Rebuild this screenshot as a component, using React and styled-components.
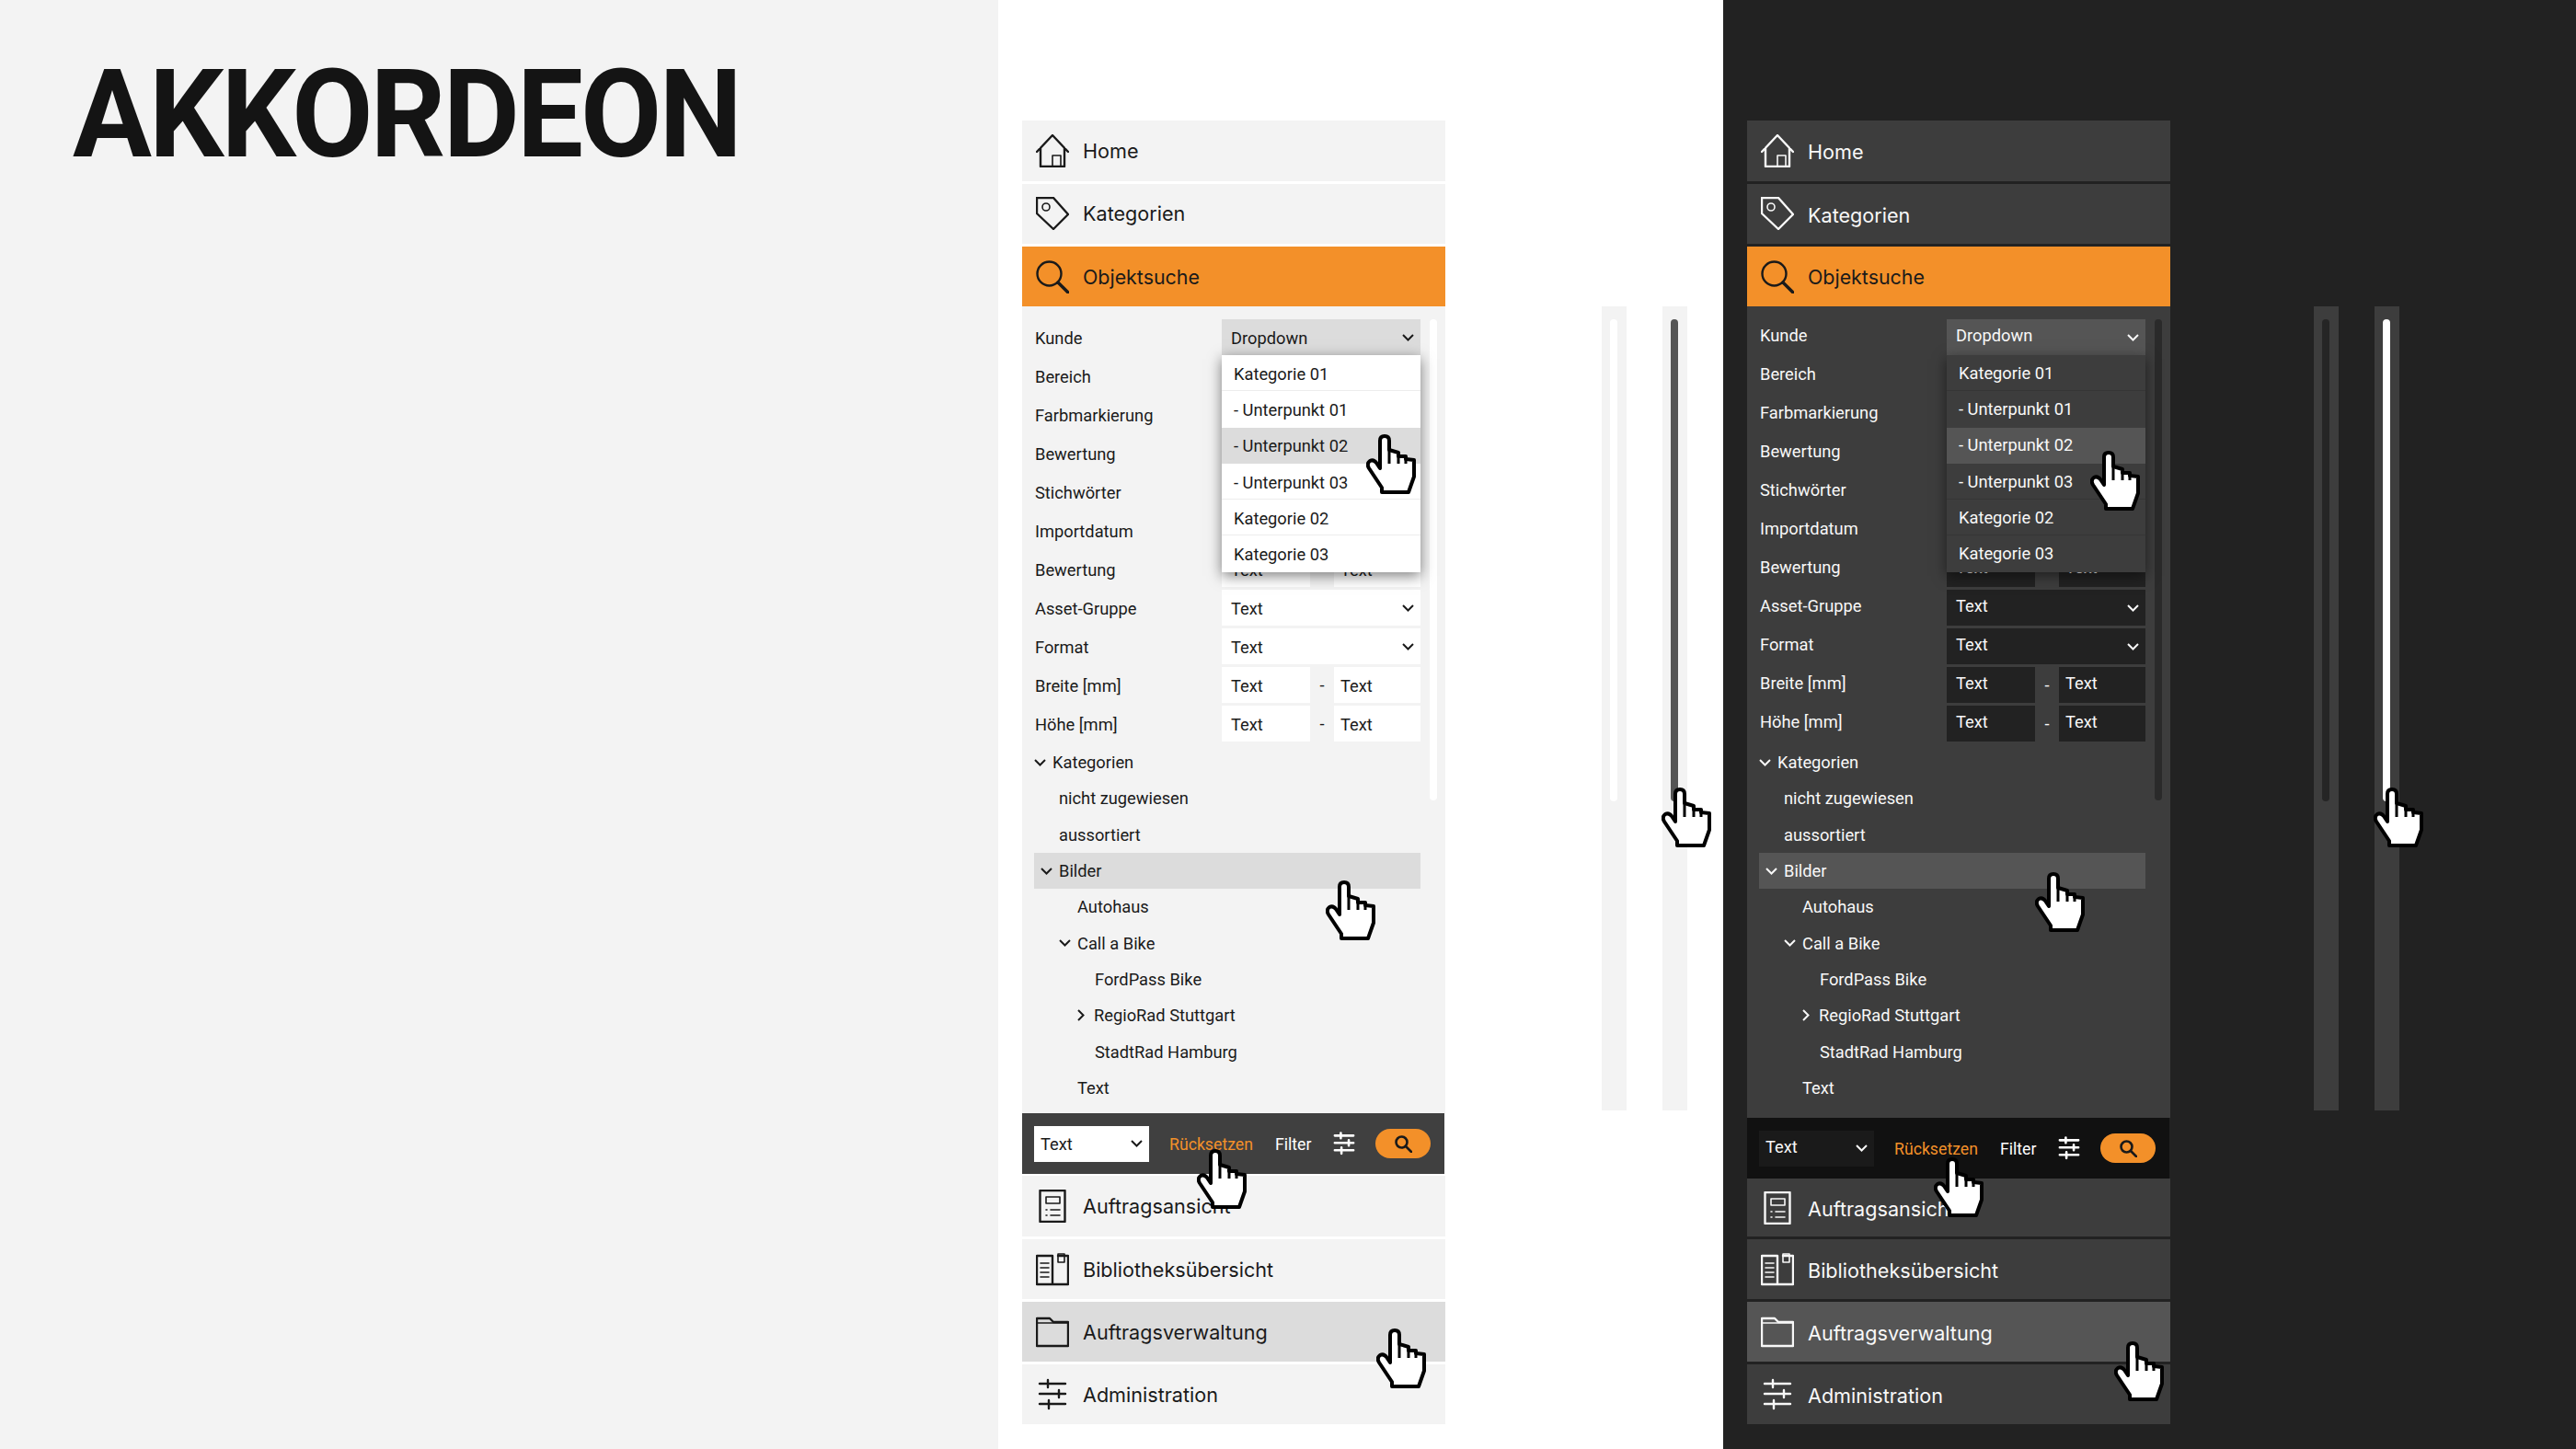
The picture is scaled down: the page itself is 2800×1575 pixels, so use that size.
import React from 'react';
import styled, { createGlobalStyle, ThemeProvider } from 'styled-components';

const light = {
  page: '#ffffff',
  surface: '#f3f3f3',
  hover: '#dcdcdc',
  text: '#1a1a1a',
  input: '#ffffff',
  menu: '#ffffff',
  separator: '#ececec',
  scroll: '#ffffff',
  toolbar: '#404040',
  toolbarSelect: '#ffffff',
  toolbarSelectText: '#1a1a1a',
  textPad: '1px 0 0',
  menuPad: '2px',
  navPad: '0px',
  selectPad: '0px',
  bodyHeight: '877px',
  afterToolbar: '2px',
  lowerFirst: '66px',
  demoGap: '170px',
  thumbIdle: '#ffffff',
  thumbActive: '#555555',
};

const dark = {
  page: '#222222',
  surface: '#3d3d3d',
  hover: '#555555',
  text: '#f8f8f8',
  input: '#222222',
  menu: '#3d3d3d',
  separator: '#353535',
  scroll: '#2a2a2a',
  toolbar: '#111111',
  toolbarSelect: '#1a1a1a',
  toolbarSelectText: '#f8f8f8',
  textPad: '0 0 4px',
  menuPad: '0px',
  navPad: '3px',
  selectPad: '3px',
  bodyHeight: '882px',
  afterToolbar: '0px',
  lowerFirst: '63px',
  demoGap: '156px',
  thumbIdle: '#252525',
  thumbActive: '#ffffff',
};

const GlobalStyle = createGlobalStyle`
  html, body { margin: 0; padding: 0; }
  body { background: #f3f3f3; font-family: Roboto, "Liberation Sans", sans-serif; }
`;

const Page = styled.div`
  position: relative;
  display: grid;
  grid-template-columns: 1085px 788px 927px;
  width: 2800px;
  height: 1575px;
  overflow: hidden;
`;

const Intro = styled.section`
  background: #f3f3f3;
  padding: 56px 0 0 79px;
`;

const Title = styled.h1`
  margin: 0;
  font-family: Roboto, "Liberation Sans", sans-serif;
  font-size: 134px;
  line-height: 138px;
  font-weight: 700;
  letter-spacing: -3px;
  color: #141414;
  transform: scaleX(0.955);
  transform-origin: left center;
`;

const Variant = styled.section`
  display: flex;
  align-items: flex-start;
  padding: 131px 0 0 26px;
  background: ${(p) => p.theme.page};
`;

const Panel = styled.div`
  display: flex;
  flex-direction: column;
  flex: 0 0 460px;
  color: ${(p) => p.theme.text};
`;

const NavRow = styled.div`
  display: flex;
  align-items: center;
  gap: 15px;
  height: ${(p) => p.$height || '65px'};
  margin-bottom: 3px;
  padding-left: 15px;
  background: ${(p) => (p.$hover ? p.theme.hover : p.theme.surface)};
  font-family: Inter, Roboto, sans-serif;
  font-size: 21.6px;
  svg { flex: none; }
`;

const NavLabel = styled.span`
  padding-top: ${(p) => p.theme.navPad};
`;

const ActiveRow = styled.div`
  display: flex;
  align-items: center;
  gap: 15px;
  height: 65px;
  padding-left: 15px;
  background: #f39029;
  color: #1a1a1a;
  font-family: Inter, Roboto, sans-serif;
  font-size: 21.4px;
`;

const Body = styled.div`
  position: relative;
  height: ${(p) => p.theme.bodyHeight};
  padding: 14px 0 0 14px;
  box-sizing: border-box;
  overflow: hidden;
  background: ${(p) => p.theme.surface};
  font-size: 18.3px;
`;

const InnerScroll = styled.div`
  position: absolute;
  left: 443px;
  top: 14px;
  width: 8px;
  height: 523px;
  border-radius: 4px;
  background: ${(p) => p.theme.scroll};
`;

const Fields = styled.div`
  display: grid;
  grid-template-columns: 203px 216px;
  grid-auto-rows: 39px;
  row-gap: 3px;
  align-items: center;
`;

const Label = styled.div`
  padding: ${(p) => p.theme.textPad};
`;

const Control = styled.div`
  position: relative;
  display: flex;
  align-items: center;
  justify-content: space-between;
  height: 39px;
  padding: 0 7px 0 10px;
  box-sizing: border-box;
  background: ${(p) => (p.$open ? p.theme.hover : p.theme.input)};
  > span { padding: ${(p) => p.theme.textPad}; }
`;

const RangeGroup = styled.div`
  display: grid;
  grid-template-columns: 96px 26px 94px;
  align-items: center;
  text-align: center;
`;

const RangeInput = styled(Control)`
  padding-left: ${(p) => p.$padLeft || '10px'};
  text-align: left;
`;

const Menu = styled.div`
  position: absolute;
  z-index: 2;
  left: 0;
  top: 39px;
  width: 216px;
  background: ${(p) => p.theme.menu};
  box-shadow: 0 4px 14px rgba(0, 0, 0, 0.5);
`;

const MenuItem = styled.div`
  display: flex;
  align-items: center;
  height: 39.3px;
  box-sizing: border-box;
  padding: ${(p) => p.theme.menuPad} 0 0 13px;
  background: ${(p) => (p.$hover ? p.theme.hover : 'transparent')};
  border-bottom: 1px solid ${(p) => (p.$line ? p.theme.separator : 'transparent')};
`;

const Tree = styled.div`
  margin: 3px 0 0 -1px;
  width: 420px;
`;

const TreeRow = styled.div`
  display: flex;
  align-items: center;
  gap: ${(p) => p.$gap || '7px'};
  height: 39.3px;
  padding-left: ${(p) => p.$pad || '0px'};
  background: ${(p) => (p.$hover ? p.theme.hover : 'transparent')};
`;

const Toolbar = styled.div`
  display: flex;
  align-items: center;
  width: 459px;
  height: 66px;
  margin-bottom: ${(p) => p.theme.afterToolbar};
  padding-left: 13px;
  box-sizing: border-box;
  background: ${(p) => p.theme.toolbar};
  color: #ffffff;
  font-size: 17.7px;
`;

const ToolbarSelect = styled.div`
  display: flex;
  align-items: center;
  justify-content: space-between;
  width: 125px;
  height: 39px;
  padding: 0 7px;
  box-sizing: border-box;
  background: ${(p) => p.theme.toolbarSelect};
  color: ${(p) => p.theme.toolbarSelectText};
  font-size: 18.3px;
  span { padding-bottom: ${(p) => p.theme.selectPad}; }
`;

const ResetLink = styled.span`
  margin-left: 22px;
  padding-top: 2px;
  color: #f39029;
`;

const FilterLink = styled.span`
  margin: 0 22px 0 24px;
  padding-top: 2px;
`;

const SearchPill = styled.div`
  display: flex;
  align-items: center;
  justify-content: center;
  width: 60px;
  height: 32px;
  margin-left: 21px;
  border-radius: 16px;
  background: #f39029;
`;

const Demos = styled.div`
  display: flex;
  gap: 39px;
  margin: 202px 0 0 ${(p) => p.theme.demoGap};
`;

const Track = styled.div`
  width: 27px;
  height: 874px;
  padding: 14px 0 0 9px;
  box-sizing: border-box;
  background: ${(p) => p.theme.surface};
`;

const Thumb = styled.div`
  width: 8px;
  height: 524px;
  border-radius: 4px;
  background: ${(p) => (p.$active ? p.theme.thumbActive : p.theme.thumbIdle)};
`;

const Cursor = styled.svg`
  position: absolute;
  z-index: 5;
  left: ${(p) => p.$x}px;
  top: ${(p) => p.$y}px;
  width: 54px;
  height: 65px;
`;

const HandPointer = ({ x, y }) => (
  <Cursor $x={x} $y={y} viewBox="0 0 54 65">
    <path
      d="M17 63 L17 58 L3 37 Q0 32 4 29 Q8 27 11 31 L15 37 L15 7 Q15 2 20 2 Q25 2 25 7 L25 17 L35 20 L35 24 L43 24 L43 27 L52 28 L52 46 L46 63 Z"
      fill="#fff"
      stroke="#000"
      strokeWidth="4"
      strokeLinejoin="round"
    />
    <path d="M15 28 V37 M25 17 V32 M35 20 V32 M43 24 V32" fill="none" stroke="#000" strokeWidth="3" />
  </Cursor>
);

const Icon = ({ children, size = 36 }) => (
  <svg
    width={size}
    height={size}
    viewBox="0 0 36 36"
    fill="none"
    stroke="currentColor"
    strokeWidth="2.4"
    strokeLinejoin="round"
    strokeLinecap="round"
  >
    {children}
  </svg>
);

const HomeIcon = () => (
  <Icon>
    <path d="M1 19 L18 1 L35 19 M5 15 V35 H31 V15" />
    <path d="M18 35 V23 H27 V35" strokeWidth="1.6" />
  </Icon>
);

const TagIcon = () => (
  <Icon>
    <path d="M1 1 H19 L35 19 L19 35 L1 18 Z" />
    <circle cx="11" cy="11" r="4" strokeWidth="1.6" />
  </Icon>
);

const SearchIcon = () => (
  <Icon>
    <circle cx="14.5" cy="14.5" r="13" />
    <path d="M24 24 L35 35" strokeWidth="3.4" />
  </Icon>
);

const OrderIcon = () => (
  <Icon>
    <rect x="4.5" y="1" width="27" height="34" />
    <rect x="11" y="8" width="15" height="7" strokeWidth="1.6" />
    <path d="M11 22 H12 M16 22 H26 M11 28 H12 M16 28 H26" strokeWidth="1.6" />
  </Icon>
);

const BookIcon = () => (
  <Icon>
    <path d="M24 3 H35 V34 H1 V3 H18 V34" />
    <path d="M24 1 H31 V10 H24 Z" strokeWidth="1.6" />
    <path d="M5 11 H14 M5 16 H14 M5 21 H14 M5 26 H14" strokeWidth="1.6" />
  </Icon>
);

const FolderIcon = () => (
  <Icon>
    <path d="M1 33 V3 H15 L19 7 H35 V33 Z" />
    <path d="M1 8 H35" strokeWidth="1.6" />
  </Icon>
);

const SlidersIcon = ({ size, weight = 2.4 }) => (
  <Icon size={size}>
    <path d="M4 6 H32 M4 17 H32 M4 28 H32" strokeWidth={weight} />
    <path d="M13 2 V10 M25 13 V21 M14 24 V33" strokeWidth={weight} />
  </Icon>
);

const ChevronDown = () => (
  <svg width="13" height="8" viewBox="0 0 13 8" fill="none" stroke="currentColor" strokeWidth="2">
    <path d="M1 1 L6.5 6.5 L12 1" />
  </svg>
);

const ChevronRight = () => (
  <svg width="8" height="13" viewBox="0 0 8 13" fill="none" stroke="currentColor" strokeWidth="2">
    <path d="M1 1 L6.5 6.5 L1 12" />
  </svg>
);

const coveredLabels = ['Bereich', 'Farbmarkierung', 'Bewertung', 'Stichwörter', 'Importdatum'];

const menuItems = [
  { text: 'Kategorie 01', line: true },
  { text: '- Unterpunkt 01' },
  { text: '- Unterpunkt 02', hover: true },
  { text: '- Unterpunkt 03', line: true },
  { text: 'Kategorie 02', line: true },
  { text: 'Kategorie 03' },
];

const Range = () => (
  <RangeGroup>
    <RangeInput><span>Text</span></RangeInput>
    <span>-</span>
    <RangeInput $padLeft="7px"><span>Text</span></RangeInput>
  </RangeGroup>
);

const TextSelect = () => (
  <Control>
    <span>Text</span>
    <ChevronDown />
  </Control>
);

function Accordion({ theme, hands }) {
  return (
    <ThemeProvider theme={theme}>
      <Variant>
        <Panel>
          <NavRow $height="65.5px"><HomeIcon /><NavLabel>Home</NavLabel></NavRow>
          <NavRow $height="65.5px"><TagIcon /><NavLabel>Kategorien</NavLabel></NavRow>
          <ActiveRow><SearchIcon />Objektsuche</ActiveRow>
          <Body>
            <InnerScroll />
            <Fields>
              <Label>Kunde</Label>
              <Control $open>
                <span>Dropdown</span>
                <ChevronDown />
                <Menu>
                  {menuItems.map((item) => (
                    <MenuItem key={item.text} $hover={item.hover} $line={item.line}>
                      {item.text}
                    </MenuItem>
                  ))}
                </Menu>
              </Control>
              {coveredLabels.map((label, i) => (
                <React.Fragment key={i}>
                  <Label>{label}</Label>
                  <Control />
                </React.Fragment>
              ))}
              <Label>Bewertung</Label>
              <Range />
              <Label>Asset-Gruppe</Label>
              <TextSelect />
              <Label>Format</Label>
              <TextSelect />
              <Label>Breite [mm]</Label>
              <Range />
              <Label>Höhe [mm]</Label>
              <Range />
            </Fields>
            <Tree>
              <TreeRow><ChevronDown />Kategorien</TreeRow>
              <TreeRow $pad="27px">nicht zugewiesen</TreeRow>
              <TreeRow $pad="27px">aussortiert</TreeRow>
              <TreeRow $pad="7px" $hover><ChevronDown />Bilder</TreeRow>
              <TreeRow $pad="47px">Autohaus</TreeRow>
              <TreeRow $pad="27px"><ChevronDown />Call a Bike</TreeRow>
              <TreeRow $pad="66px">FordPass Bike</TreeRow>
              <TreeRow $pad="47px" $gap="10px"><ChevronRight />RegioRad Stuttgart</TreeRow>
              <TreeRow $pad="66px">StadtRad Hamburg</TreeRow>
              <TreeRow $pad="47px">Text</TreeRow>
              <TreeRow $pad="47px">Text</TreeRow>
            </Tree>
          </Body>
          <Toolbar>
            <ToolbarSelect>
              <span>Text</span>
              <ChevronDown />
            </ToolbarSelect>
            <ResetLink>Rücksetzen</ResetLink>
            <FilterLink>Filter</FilterLink>
            <SlidersIcon size={26} weight={3.6} />
            <SearchPill>
              <svg width="20" height="20" viewBox="0 0 20 20" fill="none" stroke="#1a1a1a" strokeWidth="2.6">
                <circle cx="8.5" cy="8.5" r="6" />
                <path d="M13 13 L19 19" strokeLinecap="round" />
              </svg>
            </SearchPill>
          </Toolbar>
          <NavRow $height={theme.lowerFirst}><OrderIcon /><NavLabel>Auftragsansicht</NavLabel></NavRow>
          <NavRow><BookIcon /><NavLabel>Bibliotheksübersicht</NavLabel></NavRow>
          <NavRow $hover><FolderIcon /><NavLabel>Auftragsverwaltung</NavLabel></NavRow>
          <NavRow><SlidersIcon /><NavLabel>Administration</NavLabel></NavRow>
        </Panel>
        <Demos>
          <Track><Thumb /></Track>
          <Track><Thumb $active /></Track>
        </Demos>
        {hands.map(([x, y]) => (
          <HandPointer key={`${x}-${y}`} x={x} y={y} />
        ))}
      </Variant>
    </ThemeProvider>
  );
}

const lightHands = [[1485, 472], [1441, 957], [1301, 1249], [1496, 1444], [1806, 856]];
const darkHands = [[2272, 490], [2212, 948], [2102, 1258], [2298, 1458], [2580, 856]];

export default function App() {
  return (
    <Page>
      <GlobalStyle />
      <Intro>
        <Title>AKKORDEON</Title>
      </Intro>
      <Accordion theme={light} hands={lightHands} />
      <Accordion theme={dark} hands={darkHands} />
    </Page>
  );
}
